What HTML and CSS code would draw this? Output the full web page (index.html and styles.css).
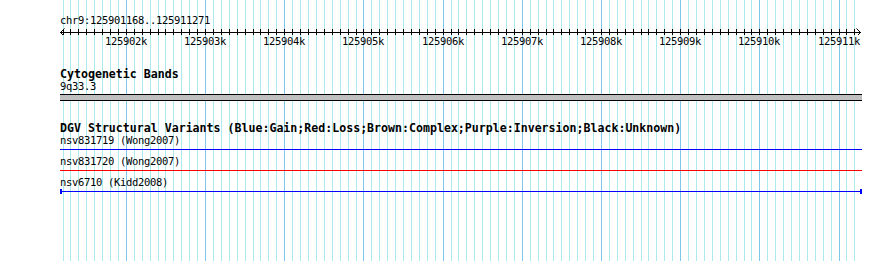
FILE: index.html
```html
<!DOCTYPE html>
<html lang="en">
<head>
    <meta charset="UTF-8">
    <meta name="viewport" content="width=device-width, initial-scale=1.0">
    <title>chr9:125901168..125911271</title>
    <link rel="stylesheet" href="styles.css">
</head>
<body>
    <div class="panel">
        <svg class="grid" id="grid" width="890" height="261"></svg>

        <div class="tracks">
            <div class="ruler">
                <div class="label">chr9:125901168..125911271</div>
                <svg class="axis" id="axis" width="890" height="9"></svg>
                <div class="ruler-labels" id="rulerLabels"></div>
            </div>

            <div class="track cyto">
                <div class="track-title">Cytogenetic Bands</div>
                <div class="label">9q33.3</div>
                <div class="band"></div>
            </div>

            <div class="track dgv">
                <div class="track-title">DGV Structural Variants (Blue:Gain;Red:Loss;Brown:Complex;Purple:Inversion;Black:Unknown)</div>
                <div class="feature">
                    <div class="label">nsv831719 (Wong2007)</div>
                    <div class="span gain"></div>
                </div>
                <div class="feature">
                    <div class="label">nsv831720 (Wong2007)</div>
                    <div class="span loss"></div>
                </div>
                <div class="feature">
                    <div class="label">nsv6710 (Kidd2008)</div>
                    <div class="span gain capped"></div>
                </div>
            </div>
        </div>
    </div>

    <script>
        const start = 125901168;
        const end = 125911271;
        const left = 60;
        const width = 800;
        const svgNS = 'http://www.w3.org/2000/svg';

        function toPx(pos) {
            return Math.round(left + (pos - start) * width / (end - start));
        }

        function rect(parent, x, y, w, h, cls) {
            const r = document.createElementNS(svgNS, 'rect');
            r.setAttribute('x', x);
            r.setAttribute('y', y);
            r.setAttribute('width', w);
            r.setAttribute('height', h);
            r.setAttribute('class', cls);
            parent.appendChild(r);
        }

        const grid = document.getElementById('grid');
        const axis = document.getElementById('axis');
        const rulerLabels = document.getElementById('rulerLabels');

        // linea del ruler y flechas
        rect(axis, left, 6, 801, 1, 'axis-line');
        const arrows = document.createElementNS(svgNS, 'path');
        arrows.setAttribute('d', 'M64.5 2.5 L60.5 6.5 L64.5 10.5 M856.5 2.5 L860.5 6.5 L856.5 10.5');
        arrows.setAttribute('class', 'arrow');
        axis.appendChild(arrows);

        // grid cada 100bp, mayor cada 1000bp
        for (let pos = Math.ceil(start / 100) * 100; pos <= end; pos += 100) {
            const x = toPx(pos);
            const major = pos % 1000 === 0;
            rect(grid, x, 0, 1, 261, major ? 'major' : 'minor');
            rect(axis, x, 3, 1, 6, 'tick');

            if (major) {
                const span = document.createElement('span');
                span.textContent = (pos / 1000) + 'k';
                span.style.left = x + 'px';
                rulerLabels.appendChild(span);
            }
        }
    </script>
</body>
</html>
```

FILE: styles.css
```css
body {
    margin: 0;
    background-color: #ffffff;
}
.panel {
    position: relative;
    width: 890px;
    height: 261px;
    overflow: hidden;
    font-family: "DejaVu Sans Mono", monospace;
    color: #000000;
}
.grid {
    position: absolute;
    top: 0;
    left: 0;
}
.grid .minor {
    fill: #aaeaee;
}
.grid .major {
    fill: #80c6ea;
}
.tracks {
    position: relative;
}
.label {
    padding-left: 60px;
    font-size: 10.5px;
    letter-spacing: -0.32px;
    line-height: 12px;
    white-space: nowrap;
}
.track-title {
    padding-left: 60px;
    font-size: 11.6px;
    font-weight: bold;
    line-height: 12px;
    white-space: nowrap;
}
.ruler {
    padding-top: 14px;
}
.axis {
    display: block;
}
.axis .axis-line,
.axis .tick {
    fill: #000000;
}
.axis .arrow {
    fill: none;
    stroke: #000000;
    stroke-width: 1;
}
.ruler-labels {
    position: relative;
    height: 12px;
    font-size: 10.5px;
    letter-spacing: -0.32px;
    line-height: 12px;
}
.ruler-labels span {
    position: absolute;
    top: 0;
    transform: translateX(-50%);
    white-space: nowrap;
}
.cyto {
    margin-top: 21px;
}
.band {
    margin: 2px 0 0 60px;
    width: 802px;
    height: 5px;
    background-color: #c0c0c0;
    border-top: 1px solid #000000;
    border-bottom: 1px solid #000000;
}
.dgv {
    margin-top: 21px;
}
.feature {
    padding-bottom: 5px;
}
.span {
    position: relative;
    margin: 3px 0 0 60px;
    width: 802px;
    height: 1px;
}
.span.gain {
    background-color: #0000ff;
}
.span.loss {
    background-color: #ff0000;
}
.span.capped::before,
.span.capped::after {
    content: "";
    position: absolute;
    top: -2px;
    width: 2px;
    height: 5px;
    background-color: #0000ff;
}
.span.capped::before {
    left: 0;
}
.span.capped::after {
    right: 0;
}
```
